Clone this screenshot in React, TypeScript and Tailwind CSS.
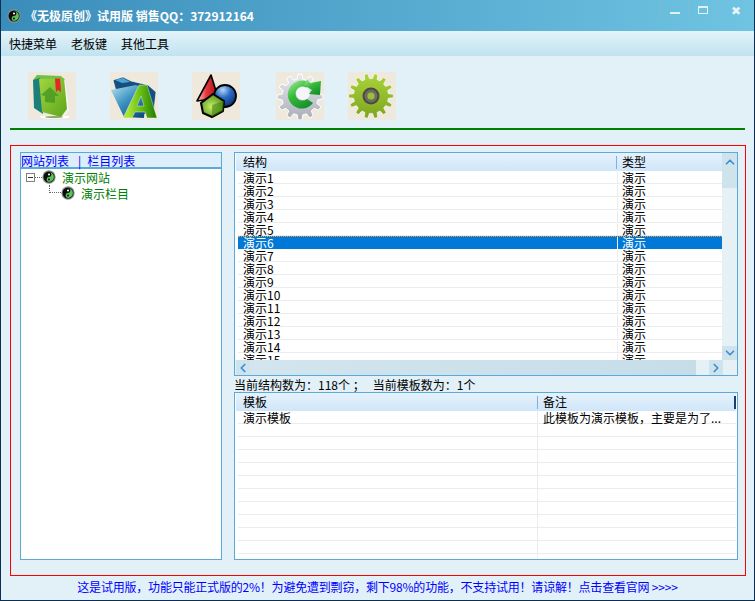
import { ReactNode } from "react";
import { ChevronDown, ChevronLeft, ChevronRight, ChevronUp } from "lucide-react";

const CJK = "font-['Noto_Sans_CJK_SC','Liberation_Sans',sans-serif]";

const gearPath = (cx: number, cy: number, outer: number, inner: number, teeth: number) => {
  const pts: string[] = [];
  for (let i = 0; i < teeth; i++) {
    const a = (i * 2 * Math.PI) / teeth;
    const s = (2 * Math.PI) / teeth;
    const at = (r: number, t: number) =>
      `${(cx + r * Math.cos(a + t * s)).toFixed(1)},${(cy + r * Math.sin(a + t * s)).toFixed(1)}`;
    pts.push(at(inner, -0.3), at(outer, -0.17), at(outer, 0.17), at(inner, 0.3));
  }
  return pts.join(" ");
};

const Taiji = ({ size }: { size: number }) => (
  <svg width={size} height={size} viewBox="0 0 16 16" className="shrink-0">
    <circle cx="8" cy="8" r="7.6" fill="#8a8f8c" />
    <circle cx="8" cy="8" r="6.3" fill="#0c0c0c" />
    <path d="M8 2.4a5.6 5.6 0 0 1 0 11.2a2.8 2.8 0 0 1 0-5.6a2.8 2.8 0 0 0 0-5.6z" fill="#56c45a" />
    <circle cx="8" cy="5.2" r="1.2" fill="#f2fff2" />
    <circle cx="8" cy="10.8" r="1.1" fill="#0c0c0c" />
  </svg>
);

const BookIcon = () => (
  <svg viewBox="0 0 48 48" className="size-full">
    <defs>
      <linearGradient id="bookCover" x1="0" y1="0" x2="1" y2="1">
        <stop offset="0" stopColor="#a2d640" />
        <stop offset="1" stopColor="#5da51a" />
      </linearGradient>
    </defs>
    <ellipse cx="27" cy="45" rx="15" ry="1.6" fill="#fff" />
    <ellipse cx="26" cy="45" rx="9" ry="1" fill="#8aa86e" />
    <path d="M32 5 L37 8 L41 38 L35 44 Z" fill="#f7f7f2" />
    <path d="M5 8 L9 3 L33 4 L37 8 Z" fill="#6fbf4a" />
    <path d="M5 8 L12 6 L15 42 L6 36 Z" fill="#1c7f7a" />
    <path d="M11 7 L36 6 L39 37 L33 45 L14 40 Z" fill="url(#bookCover)" />
    <path d="M27 6.5 L32 6.5 L33 20 L30 18 L28 20 Z" fill="#e2262b" />
    <path d="M22 15 L31 24 L27 24 L27 31 L17 30 L17 24 L13 23 Z" fill="#4a9a26" opacity="0.85" />
  </svg>
);

const FolderIcon = () => (
  <svg viewBox="0 0 48 48" className="size-full">
    <defs>
      <linearGradient id="folderBody" x1="0" y1="0" x2="0.8" y2="1">
        <stop offset="0" stopColor="#b9e2f2" />
        <stop offset="0.5" stopColor="#3c92c2" />
        <stop offset="1" stopColor="#12507f" />
      </linearGradient>
      <linearGradient id="letterA" x1="0" y1="0" x2="1" y2="0">
        <stop offset="0.15" stopColor="#a6e436" />
        <stop offset="0.55" stopColor="#63bb12" />
        <stop offset="1" stopColor="#1f7a06" />
      </linearGradient>
    </defs>
    <path d="M3 8 L13 5 L21 9 L38 13 L46 20 L44 38 L30 44 L10 34 Z" fill="#14507f" stroke="#fff" strokeWidth="0.6" />
    <path d="M5 8 L13 6 L20 10 L12 11 Z" fill="#4fa5cf" />
    <path d="M1 18 L26 13 L36 18 L34 46 L14 45 Z" fill="url(#folderBody)" />
    <path
      d="M29 13 L37 13 L47 46 L37 46 L35 40 L25 40 L22 46 L13 46 Z M31 24 L27 34 L34 34 Z"
      fill="url(#letterA)"
      fillRule="evenodd"
      stroke="#fff"
      strokeWidth="0.4"
    />
  </svg>
);

const ShapesIcon = () => (
  <svg viewBox="0 0 48 48" className="size-full">
    <defs>
      <linearGradient id="cone" x1="0" y1="0" x2="1" y2="0">
        <stop offset="0" stopColor="#ffd0d0" />
        <stop offset="0.45" stopColor="#e8393c" />
        <stop offset="1" stopColor="#a31216" />
      </linearGradient>
      <radialGradient id="ball" cx="0.4" cy="0.22" r="0.8">
        <stop offset="0" stopColor="#b8d6f5" />
        <stop offset="0.45" stopColor="#2a6cc4" />
        <stop offset="1" stopColor="#0c2f70" />
      </radialGradient>
      <radialGradient id="cube" cx="0.45" cy="0.55" r="0.6">
        <stop offset="0" stopColor="#c4ee6d" />
        <stop offset="1" stopColor="#4f8f10" />
      </radialGradient>
    </defs>
    <path d="M19 3 L25 22 L12 28 L5 29 Z" fill="url(#cone)" stroke="#000" strokeWidth="1.6" strokeLinejoin="round" />
    <circle cx="33" cy="24" r="11" fill="url(#ball)" stroke="#000" strokeWidth="1.8" />
    <path d="M9 31 L21 22 L32 29 L31 39 L20 45 L11 41 Z" fill="url(#cube)" stroke="#000" strokeWidth="2" strokeLinejoin="round" />
    <path d="M20 33 L32 29 L31 39 L20 45 Z" fill="#3f7f0c" opacity="0.55" />
  </svg>
);

const RefreshGearIcon = () => (
  <svg viewBox="0 0 48 48" className="size-full">
    <defs>
      <linearGradient id="steel" x1="0" y1="0" x2="0" y2="1">
        <stop offset="0" stopColor="#e8eaf0" />
        <stop offset="1" stopColor="#a9adb8" />
      </linearGradient>
      <linearGradient id="arrowGreen" x1="0" y1="0" x2="0.6" y2="1">
        <stop offset="0" stopColor="#a8ee9a" />
        <stop offset="0.5" stopColor="#35bb3a" />
        <stop offset="1" stopColor="#18922a" />
      </linearGradient>
    </defs>
    <polygon points={gearPath(24, 25, 23, 18, 12)} fill="url(#steel)" stroke="#fff" strokeWidth="1" />
    <circle cx="27" cy="21" r="7" fill="#f4f6f8" />
    <path d="M36 13 A14 14 0 1 0 37 31 L31 27 A7 7 0 1 1 30 15.5 Z" fill="url(#arrowGreen)" />
    <path d="M31 7 L34 11 L45 9 L44 23 L33 22 L36 18 L28 13 Z" fill="url(#arrowGreen)" />
  </svg>
);

const GreenGearIcon = () => (
  <svg viewBox="0 0 48 48" className="size-full">
    <defs>
      <linearGradient id="limeGear" x1="0" y1="0" x2="0" y2="1">
        <stop offset="0" stopColor="#a9d43a" />
        <stop offset="1" stopColor="#7ea51f" />
      </linearGradient>
    </defs>
    <polygon points={gearPath(23, 24, 22.5, 17.5, 14)} fill="url(#limeGear)" stroke="#fff" strokeWidth="0.6" />
    <circle cx="23" cy="24" r="8.5" fill="#4a4a42" />
    <circle cx="23" cy="24" r="6.5" fill="#6d6d62" />
    <circle cx="23" cy="24" r="3.6" fill="#9dbf38" />
  </svg>
);

const tools = [
  { el: <BookIcon />, cls: "ml-[27px]" },
  { el: <FolderIcon />, cls: "ml-[34px]" },
  { el: <ShapesIcon />, cls: "ml-[34px]" },
  { el: <RefreshGearIcon />, cls: "ml-[36px]" },
  { el: <GreenGearIcon />, cls: "ml-[24px]" },
];

const HeadCell = ({ children, className }: { children: ReactNode; className: string }) => (
  <div className={`flex h-full items-center pb-[2px] ${className}`}>{children}</div>
);

const ScrollBtn = ({ children, className = "" }: { children: ReactNode; className?: string }) => (
  <div className={`flex shrink-0 items-center justify-center bg-[#cfe3ec] text-[#3f8fd8] ${className}`}>{children}</div>
);

const structRows = Array.from({ length: 15 }, (_, i) => `演示${i + 1}`);

export default function App() {
  return (
    <div className={`flex h-[601px] w-[755px] flex-col overflow-hidden border-x border-b border-x-[#0b2f52] border-b-[#0b2f52] bg-[#e2f1f8] text-[12px] leading-[13px] text-black ${CJK}`}>
      <div className="flex h-[31px] shrink-0 items-center bg-gradient-to-r from-[#3a8dba] to-[#6fc4e2] pl-[6px] font-bold text-white">
        <Taiji size={14} />
        <span className="ml-[4px]">《无极原创》试用版 销售QQ：372912164</span>
        <div className="ml-auto flex h-[19px] self-start">
          <div className="flex w-[28px] items-center justify-center border-l border-[#7fb9d3]">
            <div className="mt-[7px] h-[2px] w-[10px] bg-[#e2f1f8]" />
          </div>
          <div className="flex w-[28px] items-center justify-center border-l border-[#7fb9d3]">
            <div className="h-[8px] w-[10px] border border-t-2 border-[#e2f1f8]" />
          </div>
          <div className="flex w-[38px] items-center justify-center border-l border-[#7fb9d3] text-[12px] leading-none font-normal text-[#e8f3f8]">
            ✖
          </div>
        </div>
      </div>

      <div className="flex h-[25px] shrink-0 items-center gap-[14px] bg-gradient-to-b from-[#e4f3f9] to-[#bfe3f0] pl-[8px]">
        <span>快捷菜单</span>
        <span>老板键</span>
        <span>其他工具</span>
      </div>

      <div className="flex shrink-0 pt-[16px]">
        {tools.map((t, i) => (
          <div key={i} className={`size-[48px] bg-[#eee9dc] ${t.cls}`}>
            {t.el}
          </div>
        ))}
      </div>

      <div className="mt-[8px] ml-[9px] mr-[9px] h-[2px] shrink-0 bg-[#008000]" />

      <div className="mt-[15px] ml-[9px] mr-[8px] flex h-[431px] shrink-0 gap-[12px] border border-[#ff0000] pt-[6px] pr-[7px] pb-[15px] pl-[9px]">
        <div className="flex w-[202px] shrink-0 flex-col border border-[#5ca9d8] bg-white">
          <div className="flex h-[16px] shrink-0 items-center border-b-2 border-[#5ca9d8] bg-[#dcedfb] text-[#0000ff]">
            <span>网站列表</span>
            <span className="ml-[9px] mr-[6px]">|</span>
            <span>栏目列表</span>
          </div>
          <div className="flex flex-col text-[#008000]">
            <div className="flex h-[16px] items-center pl-[5px]">
              <div className="flex size-[9px] items-center justify-center border border-[#808080] bg-white">
                <div className="h-px w-[5px] bg-[#333]" />
              </div>
              <div className="w-[7px] border-t border-dotted border-[#666]" />
              <Taiji size={14} />
              <span className="ml-[6px]">演示网站</span>
            </div>
            <div className="flex h-[16px] items-center pl-[28px]">
              <div className="mb-[8px] h-[8px] w-[12px] border-b border-l border-dotted border-[#666]" />
              <Taiji size={14} />
              <span className="ml-[6px]">演示栏目</span>
            </div>
          </div>
        </div>

        <div className="flex min-w-0 flex-1 flex-col">
          <div className="flex h-[224px] shrink-0 flex-col border border-[#5ca9d8] bg-white">
            <div className="flex min-h-0 flex-1">
              <div className="flex min-w-0 flex-1 flex-col overflow-hidden pl-px">
                <div className="flex h-[18px] shrink-0 items-center bg-gradient-to-b from-[#e6f2fc] to-[#cfe6fa]">
                  <HeadCell className="w-[380px] pl-[7px]">结构</HeadCell>
                  <div className="h-[13px] w-px bg-[#7fb2d6]" />
                  <HeadCell className="flex-1 pl-[5px]">类型</HeadCell>
                </div>
                {structRows.map((name, i) => (
                  <div
                    key={name}
                    className={`ml-[2px] flex h-[13px] shrink-0 items-start ${
                      i === 5
                        ? "border-t border-dotted border-t-[#f0a030] bg-[#0078d7] text-white"
                        : "border-b border-[#ececec] pt-px"
                    }`}
                  >
                    <div className="w-[380px] border-r border-[#ececec] pl-[5px] leading-[12px]">{name}</div>
                    <div className="flex-1 pl-[4px] leading-[12px]">演示</div>
                  </div>
                ))}
              </div>
              <div className="flex w-[15px] shrink-0 flex-col bg-[#e6f1f5]">
                <ScrollBtn className="h-[17px]">
                  <ChevronUp size={14} strokeWidth={3} />
                </ScrollBtn>
                <div className="h-[18px] shrink-0 bg-[#cfe3ec]" />
                <div className="flex-1" />
                <ScrollBtn className="h-[14px]">
                  <ChevronDown size={14} strokeWidth={3} />
                </ScrollBtn>
              </div>
            </div>
            <div className="flex h-[15px] shrink-0 bg-[#e6f1f5] pl-px">
              <ScrollBtn className="w-[14px]">
                <ChevronLeft size={14} strokeWidth={3} />
              </ScrollBtn>
              <div className="w-[446px] bg-gradient-to-r from-[#d3e5ee] to-[#c6dde8]" />
              <div className="flex-1" />
              <ScrollBtn className="mr-[14px] w-[14px]">
                <ChevronRight size={14} strokeWidth={3} />
              </ScrollBtn>
            </div>
          </div>

          <div className="flex h-[16px] shrink-0 items-center">
            当前结构数为：118个 ；&nbsp;&nbsp;&nbsp;当前模板数为：1个
          </div>

          <div className="flex min-h-0 flex-1 flex-col overflow-hidden border border-[#5ca9d8] bg-white px-px">
            <div className="flex h-[18px] shrink-0 items-center bg-gradient-to-b from-[#e6f2fc] to-[#cfe6fa]">
              <HeadCell className="w-[301px] pl-[7px]">模板</HeadCell>
              <div className="h-[13px] w-px bg-[#7fb2d6]" />
              <HeadCell className="flex-1 pl-[5px]">备注</HeadCell>
              <div className="h-[13px] w-[2px] bg-[#1f3f66]" />
            </div>
            {Array.from({ length: 12 }, (_, i) => (
              <div key={i} className="ml-[2px] flex h-[13px] shrink-0 items-stretch border-b border-[#ececec]">
                <div className="w-[300px] border-r border-[#ececec] pt-px pl-[5px] leading-[12px]">{i === 0 ? "演示模板" : ""}</div>
                <div className="flex-1 pt-px pl-[5px] leading-[12px] whitespace-nowrap">
                  {i === 0 ? "此模板为演示模板，主要是为了..." : ""}
                </div>
              </div>
            ))}
          </div>
        </div>
      </div>

      <div className="flex flex-1 items-center justify-center pb-[4px] tracking-[-0.2px] text-[#0000ff]">
        这是试用版，功能只能正式版的2%！为避免遭到剽窃，剩下98%的功能，不支持试用！请谅解！点击查看官网 &gt;&gt;&gt;&gt;
      </div>
    </div>
  );
}
